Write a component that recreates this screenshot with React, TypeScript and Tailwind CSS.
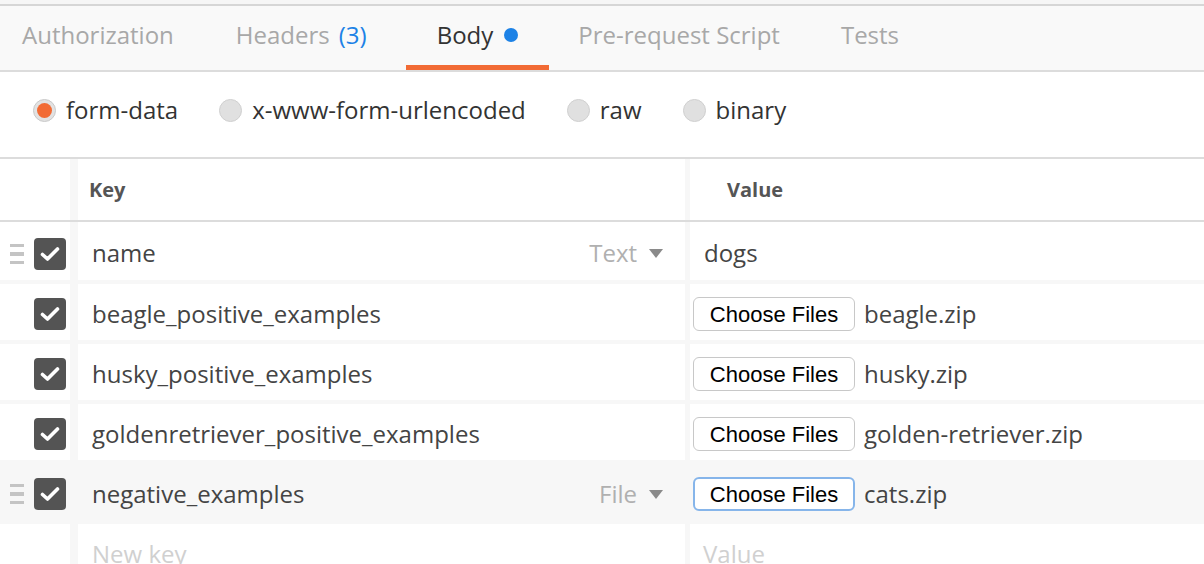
import React from 'react';

const font = { fontFamily: '"Open Sans", "Liberation Sans", sans-serif' };

const tabs = [
  { label: 'Authorization', pad: 'pl-[22px] pr-[31px]' },
  { label: 'Headers', count: '(3)', pad: 'pl-[31px] pr-[39px]' },
  { label: 'Body', active: true, dot: true, pad: 'px-[31px]' },
  { label: 'Pre-request Script', pad: 'pl-[29px] pr-[31px]' },
  { label: 'Tests', pad: 'pl-[30px] pr-[30px]' },
];

const modes = [
  { label: 'form-data', checked: true },
  { label: 'x-www-form-urlencoded' },
  { label: 'raw' },
  { label: 'binary' },
];

const rows = [
  { key: 'name', type: 'Text', value: 'dogs', handle: true, first: true },
  { key: 'beagle_positive_examples', file: 'beagle.zip' },
  { key: 'husky_positive_examples', file: 'husky.zip' },
  { key: 'goldenretriever_positive_examples', file: 'golden-retriever.zip' },
  { key: 'negative_examples', type: 'File', file: 'cats.zip', handle: true, hover: true, focus: true },
];

const Handle = () => (
  <div className="flex flex-col gap-[5px] w-[14px]">
    <span className="block h-[3.5px] bg-[#c4c4c4]" />
    <span className="block h-[3.5px] bg-[#c4c4c4]" />
    <span className="block h-[3.5px] bg-[#c4c4c4]" />
  </div>
);

const Check = () => (
  <div className="w-[32px] h-[32px] rounded-[4px] bg-[#545454] flex items-center justify-center">
    <svg width="20" height="16" viewBox="0 0 20 16">
      <polyline points="2.5,8.5 7.5,13 17.5,3" fill="none" stroke="white" strokeWidth="3.6" strokeLinecap="round" strokeLinejoin="round" />
    </svg>
  </div>
);

const Caret = () => (
  <svg width="14" height="9" viewBox="0 0 14 9" className="ml-[12px]">
    <polygon points="0,0 14,0 7,9" fill="#8a8a8a" />
  </svg>
);

const Row = ({ row }: any) => {
  const cell = row.hover ? 'bg-[#f7f7f7]' : 'bg-white';
  return (
    <div className={`flex gap-[8px] ${row.first ? 'h-[58px]' : 'h-[56px]'}`}>
      <div className={`w-[70px] shrink-0 flex items-center ${row.first ? 'pt-[6px]' : 'pt-[4px]'} ${cell}`}>
        <div className="w-[34px] pl-[10px]">{row.handle && <Handle />}</div>
        <Check />
      </div>
      <div className={`w-[607px] shrink-0 flex items-center justify-between pl-[14px] pr-[22px] pt-[4px] ${cell}`}>
        <span className="text-[24px] text-[#444]">{row.key}</span>
        {row.type && (
          <span className="flex items-center text-[24px] text-[#b0b0b0]">
            {row.type}
            <Caret />
          </span>
        )}
      </div>
      <div className={`flex-1 flex items-center -ml-[3px] pt-[4px] ${cell}`}>
        {row.file ? (
          <div className="flex items-center pl-[3px]">
            <button
              className={`h-[34px] w-[162px] rounded-[6px] bg-white text-black text-[22px] flex items-center justify-center ${row.focus ? 'border-2 border-[#86b5ea]' : 'border border-[#c8c8c8]'}`}
              style={{ fontFamily: '"Liberation Sans", Arial, sans-serif' }}
            >
              Choose Files
            </button>
            <span className="ml-[9px] text-[24px] text-[#444]">{row.file}</span>
          </div>
        ) : (
          <span className="pl-[14px] text-[24px] text-[#444]">{row.value}</span>
        )}
      </div>
    </div>
  );
};

export default function App() {
  return (
    <div className="w-[1204px] h-[564px] overflow-hidden bg-white" style={font}>
      <div className="h-[4px] bg-[#f6f6f6]" />
      <div className="h-[2px] bg-[#d6d6d6]" />
      <div className="h-[66px] bg-[#f9f9f9] flex items-stretch border-b-2 border-[#dcdcdc]">
        {tabs.map((t) => (
          <div key={t.label} className={`relative flex items-center pb-[6px] ${t.pad}`}>
            <span className={`text-[24px] ${t.active ? 'text-[#333]' : 'text-[#a8a8a8]'}`}>{t.label}</span>
            {t.count && <span className="ml-[9px] text-[24px] text-[#1d82e6]">{t.count}</span>}
            {t.dot && <span className="ml-[11px] w-[14px] h-[14px] rounded-full bg-[#1d82e6]" />}
            {t.active && <span className="absolute left-0 right-0 bottom-0 h-[5px] bg-[#f26b35]" />}
          </div>
        ))}
      </div>
      <div className="h-[87px] flex items-center pl-[33px] pb-[9px] border-b-2 border-[#dcdcdc]">
        {modes.map((m) => (
          <div key={m.label} className="flex items-center mr-[41px]">
            {m.checked ? (
              <span className="w-[23px] h-[23px] rounded-full bg-[#e2e2e2] border border-[#c9c9c9] flex items-center justify-center">
                <span className="w-[15px] h-[15px] rounded-full bg-[#f26b35]" />
              </span>
            ) : (
              <span className="w-[23px] h-[23px] rounded-full bg-[#e0e0e0] border border-[#d0d0d0]" />
            )}
            <span className="ml-[10px] text-[24px] text-[#333]">{m.label}</span>
          </div>
        ))}
      </div>
      <div className="flex gap-[8px] h-[63px] bg-[#f7f7f7] border-b-2 border-[#dcdcdc]">
        <div className="w-[70px] shrink-0 bg-white" />
        <div className="w-[607px] shrink-0 bg-white flex items-center pl-[11px] text-[20px] font-bold text-[#555]">Key</div>
        <div className="flex-1 -ml-[3px] bg-white flex items-center pl-[37px] text-[20px] font-bold text-[#555]">Value</div>
      </div>
      <div className="bg-[#f7f7f7] flex flex-col gap-[4px]">
        {rows.map((r) => (
          <Row key={r.key} row={r} />
        ))}
        <div className="flex gap-[8px] h-[56px]">
          <div className="w-[70px] shrink-0 bg-white" />
          <div className="w-[607px] shrink-0 bg-white flex items-center pl-[14px] pt-[4px] text-[24px] text-[#d0d0d0]">New key</div>
          <div className="flex-1 -ml-[3px] bg-white flex items-center pl-[13px] pt-[4px] text-[24px] text-[#d0d0d0]">Value</div>
        </div>
      </div>
    </div>
  );
}
